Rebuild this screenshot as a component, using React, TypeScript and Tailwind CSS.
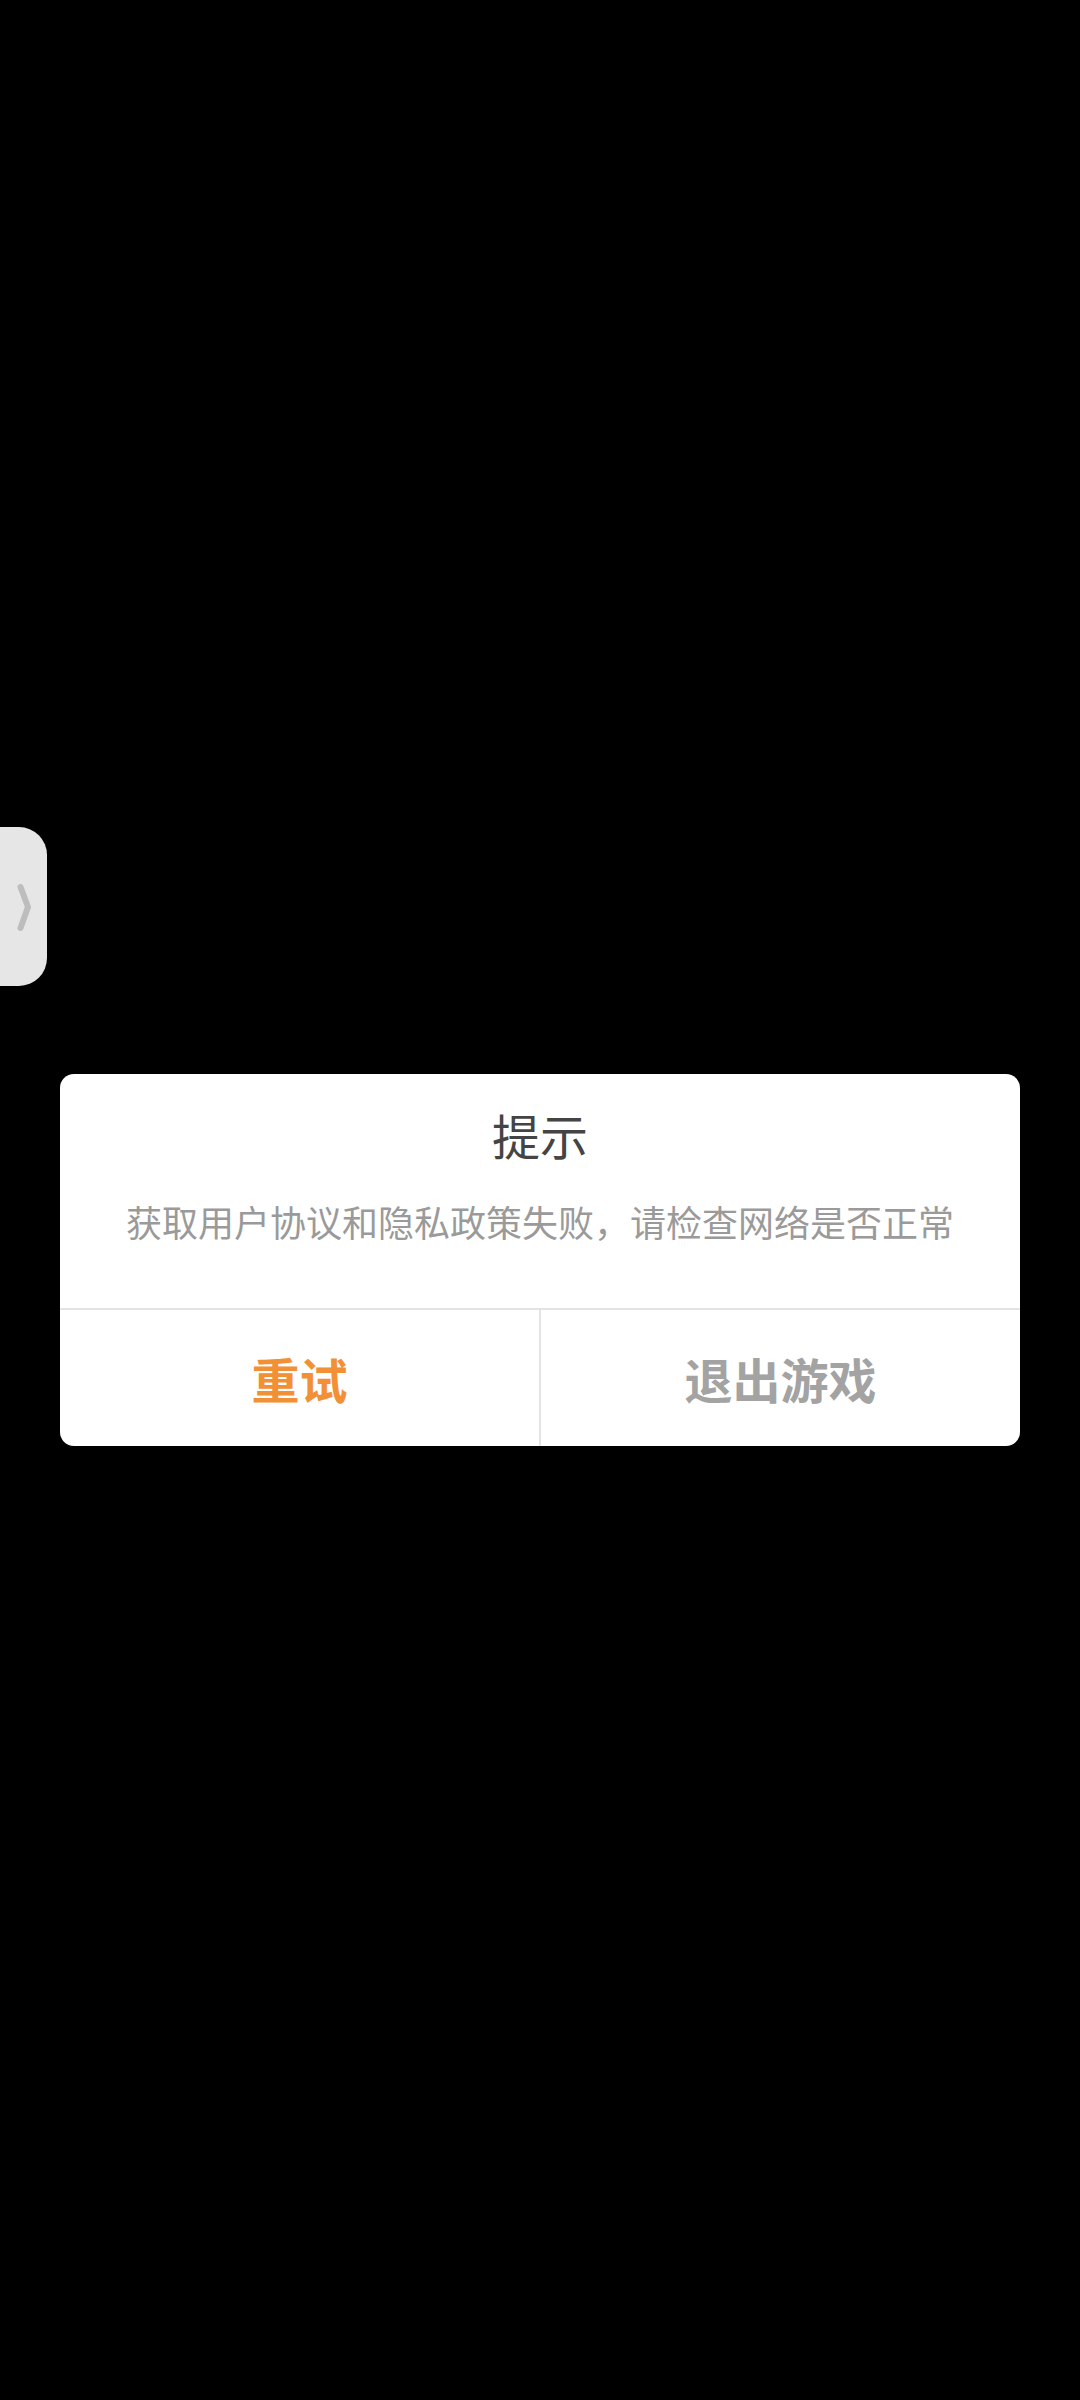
import React from "react";

export default function App() {
  return (
    <div
      className="relative w-[1080px] h-[2400px] bg-black overflow-hidden"
      style={{ fontFamily: '"Noto Sans CJK SC", "Noto Sans", sans-serif' }}
    >
      {/* side tab */}
      <div className="absolute left-0 top-[827px] w-[47px] h-[159px] bg-[#e6e6e6] rounded-r-[28px]">
        <svg width="47" height="159" viewBox="0 0 47 159" className="block">
          <polyline
            points="20.5,60 28,80 20.5,101"
            fill="none"
            stroke="#bdbdbd"
            strokeWidth="6"
            strokeLinecap="round"
            strokeLinejoin="round"
          />
        </svg>
      </div>

      <div className="pt-[1074px] px-[60px]">
        <div className="w-[960px] bg-white rounded-[14px] overflow-hidden">
          <div className="h-[234px] flex flex-col items-center pt-[32px]">
            <div className="text-[48px] leading-[56px] text-[#444444]">提示</div>
            <div className="mt-[35px] text-[36px] leading-[48px] text-[#9a9a9a]">
              获取用户协议和隐私政策失败，请检查网络是否正常
            </div>
          </div>
          <div className="h-[2px] bg-[#e3e3e3]" />
          <div className="flex h-[136px]">
            <div className="flex-1 flex items-center justify-center text-[48px] font-bold text-[#f29035]">
              重试
            </div>
            <div className="w-[2px] bg-[#e3e3e3]" />
            <div className="flex-1 flex items-center justify-center text-[48px] font-bold text-[#a3a3a3]">
              退出游戏
            </div>
          </div>
        </div>
      </div>
    </div>
  );
}
